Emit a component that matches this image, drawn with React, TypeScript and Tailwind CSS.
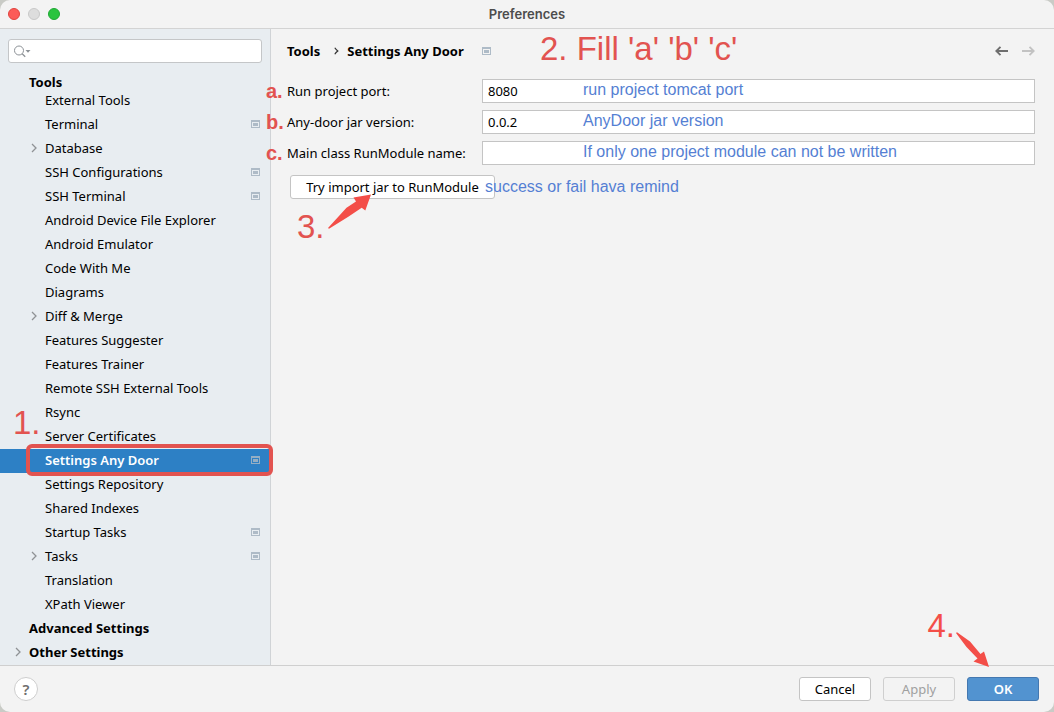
import React from "react";

type Item = {
  name: string;
  level?: 0 | 1;
  chevron?: boolean;
  project?: boolean;
  selected?: boolean;
};

const items: Item[] = [
  { name: "External Tools" },
  { name: "Terminal", project: true },
  { name: "Database", chevron: true },
  { name: "SSH Configurations", project: true },
  { name: "SSH Terminal", project: true },
  { name: "Android Device File Explorer" },
  { name: "Android Emulator" },
  { name: "Code With Me" },
  { name: "Diagrams" },
  { name: "Diff & Merge", chevron: true },
  { name: "Features Suggester" },
  { name: "Features Trainer" },
  { name: "Remote SSH External Tools" },
  { name: "Rsync" },
  { name: "Server Certificates" },
  { name: "Settings Any Door", project: true, selected: true },
  { name: "Settings Repository" },
  { name: "Shared Indexes" },
  { name: "Startup Tasks", project: true },
  { name: "Tasks", chevron: true, project: true },
  { name: "Translation" },
  { name: "XPath Viewer" },
  { name: "Advanced Settings", level: 0 },
  { name: "Other Settings", level: 0, chevron: true },
];

const fields = [
  { id: "port", mark: "a.", label: "Run project port:", value: "8080", note: "run project tomcat port" },
  { id: "version", mark: "b.", label: "Any-door jar version:", value: "0.0.2", note: "AnyDoor jar version" },
  { id: "module", mark: "c.", label: "Main class RunModule name:", value: "", note: "If only one project module can not be written" },
];

function ProjectIcon({ className }: { className: string }) {
  return (
    <svg width="9" height="8" viewBox="0 0 9 8" className={className} fill="currentColor" aria-hidden="true">
      <path fillRule="evenodd" d="M0 0h9v8H0zM1 2v5h7V2z" />
      <rect x="2" y="3" width="5" height="3" />
    </svg>
  );
}

function Chevron() {
  return (
    <svg width="6" height="10" viewBox="0 0 6 10" fill="none" stroke="#8f9295" strokeWidth="1.3" aria-hidden="true">
      <path d="M1 1l4 4-4 4" />
    </svg>
  );
}

function TreeRow({ item }: { item: Item }) {
  const top = item.level === 0;
  return (
    <li className="relative">
      <button
        type="button"
        aria-current={item.selected ? "page" : undefined}
        className={
          "flex h-6 w-full items-center pr-[10px] pb-[2px] text-left " +
          (item.selected ? "bg-[#2d80c5] font-semibold text-white " : "") +
          (top ? "pl-[15px] font-bold" : "pl-[31px]")
        }
      >
        <span className="flex w-[14px] shrink-0">{item.chevron && <Chevron />}</span>
        <span className="flex-1 whitespace-nowrap">{item.name}</span>
        {item.project && <ProjectIcon className={item.selected ? "text-[#94aec4]" : "text-[#aebbc7]"} />}
      </button>
      {item.selected && (
        <>
          <span className="pointer-events-none absolute -top-[5px] -right-[3px] -bottom-[3px] left-[26px] z-10 rounded-md border-4 border-[#e25350]" />
          <span className="pointer-events-none absolute -top-[42px] left-[13px] font-['Liberation_Sans',sans-serif] text-[33px] leading-8 text-[#e25350]">
            1.
          </span>
        </>
      )}
    </li>
  );
}

export default function App() {
  return (
    <div className="min-h-screen bg-[#c9cbc6]">
      <div className="flex min-h-screen flex-col overflow-hidden rounded-[10px] bg-[#f3f3f3] font-['Noto_Sans',sans-serif] text-[13px] leading-4 text-black">
        <header className="relative flex h-[29px] items-center justify-center border-b border-[#d3d3d3]">
          <div className="absolute left-2 flex gap-2">
            <button type="button" aria-label="Close" className="size-3 rounded-full border border-[#e0443e] bg-[#fc5b57]" />
            <button type="button" aria-label="Minimize" className="size-3 rounded-full border border-[#c8c8c8] bg-[#dddddd]" />
            <button type="button" aria-label="Zoom" className="size-3 rounded-full border border-[#1fa834] bg-[#29c43f]" />
          </div>
          <h1 className="pb-px font-['Inter',sans-serif] text-[13px] font-semibold text-[#4c4c4c]">Preferences</h1>
        </header>

        <div className="flex flex-1">
          <nav className="w-[271px] shrink-0 border-r border-[#d0d3d6] bg-[#e8edf1]">
            <div className="mx-2 mt-[10px] flex h-6 items-center rounded-[3px] border border-[#c4c6c8] bg-white pl-[5px]">
              <svg width="17" height="13" viewBox="0 0 17 13" fill="none" stroke="#8c9196" aria-hidden="true">
                <circle cx="5" cy="5.5" r="4.5" />
                <path d="M8.2 8.8l3 3" strokeWidth="1.3" />
                <path d="M11.5 5h5l-2.500 2.800z" fill="#8c9196" stroke="none" />
              </svg>
              <input type="search" aria-label="Search settings" className="h-full min-w-0 flex-1 bg-transparent px-1 outline-none" />
            </div>
            <h2 className="mt-[11px] h-[15px] pl-[29px] font-bold">Tools</h2>
            <ul>
              {items.map((item) => (
                <TreeRow key={item.name} item={item} />
              ))}
            </ul>
          </nav>

          <main className="min-w-0 flex-1 pr-[19px] pl-4">
            <div className="relative flex h-[50px] items-center pb-[6px]">
              <h2 className="flex items-center font-bold">
                Tools
                <svg width="5" height="8" viewBox="0 0 5 8" fill="none" stroke="#333" strokeWidth="1.2" className="mr-2 ml-[14px]" aria-hidden="true">
                  <path d="M0.800 0.800C1.800 2.500 2.700 3.200 3.800 4C2.700 4.800 1.800 5.500 0.800 7.200" />
                </svg>
                Settings Any Door
              </h2>
              <ProjectIcon className="ml-[18px] text-[#aebbc7]" />
              <span className="absolute top-1 left-[253px] font-['Liberation_Sans',sans-serif] text-[33px] leading-8 whitespace-nowrap text-[#e25350]">
                2. Fill 'a' 'b' 'c'
              </span>
              <div className="ml-auto flex gap-[14px]">
                <button type="button" aria-label="Back" className="text-[#6e6e6e]">
                  <svg width="13" height="10" viewBox="0 0 13 10" fill="none" stroke="currentColor" strokeWidth="1.900" aria-hidden="true">
                    <path d="M13 5H1.500M5.500 0.800L1.300 5l4.200 4.200" />
                  </svg>
                </button>
                <button type="button" aria-label="Forward" className="text-[#c2c2c2]">
                  <svg width="13" height="10" viewBox="0 0 13 10" fill="none" stroke="currentColor" strokeWidth="1.900" aria-hidden="true">
                    <path d="M0 5h11.500M7.500 0.800L11.700 5L7.500 9.200" />
                  </svg>
                </button>
              </div>
            </div>

            <form className="flex flex-col gap-[7px]" onSubmit={(e) => e.preventDefault()}>
              {fields.map((f) => (
                <div key={f.id} className="relative grid grid-cols-[195px_1fr] items-center">
                  <span className="absolute -left-[21px] font-['Liberation_Sans',sans-serif] text-xl leading-6 font-bold text-[#e25350]">{f.mark}</span>
                  <label htmlFor={f.id} className="whitespace-nowrap">{f.label}</label>
                  <div className="relative">
                    <input
                      id={f.id}
                      type="text"
                      defaultValue={f.value}
                      className="block h-6 w-full border border-[#c4c4c4] bg-white px-[5px] outline-none"
                    />
                    <span className="pointer-events-none absolute top-[2px] left-[101px] font-['Liberation_Sans',sans-serif] text-base leading-[18px] whitespace-nowrap text-[#557fd3]">
                      {f.note}
                    </span>
                  </div>
                </div>
              ))}
              <div className="relative mt-[3px] ml-[3px] flex">
                <button type="button" className="h-6 w-[205px] rounded-[3px] border border-[#c4c4c4] bg-white whitespace-nowrap">
                  Try import jar to RunModule
                </button>
                <span className="absolute top-[3px] left-[195px] font-['Liberation_Sans',sans-serif] text-base leading-[18px] whitespace-nowrap text-[#557fd3]">
                  success or fail hava remind
                </span>
                <span className="absolute top-9 left-[7px] font-['Liberation_Sans',sans-serif] text-[33px] leading-8 text-[#e25350]">3.</span>
                <svg width="44" height="35" viewBox="0 0 44 35" className="pointer-events-none absolute top-[19px] left-[38px]" fill="#f34e48" aria-hidden="true">
                  <path d="M43 0.500L37.300 16.500L33.700 13.700L20.300 22.700L1 34.800L0 34L18.500 13.800L28 7.500L25.500 3.500z" />
                </svg>
              </div>
            </form>
          </main>
        </div>

        <footer className="relative flex h-[47px] items-center justify-between border-t border-[#cfcfcf] pr-[15px] pl-[14px]">
          <button type="button" aria-label="Help" className="flex size-6 items-center justify-center rounded-full border border-[#cdcdcd] bg-white text-[15px] font-semibold text-[#6e6e6e]">
            ?
          </button>
          <div className="flex gap-3">
            <button type="button" className="h-6 w-[72px] rounded-[3px] border border-[#c4c4c4] bg-white">Cancel</button>
            <button type="button" disabled className="h-6 w-[72px] rounded-[3px] border border-[#cfcfcf] text-[#a0a0a0]">Apply</button>
            <button type="submit" className="h-6 w-[72px] rounded-[3px] border border-[#4478b0] bg-[#5293d0] font-semibold text-white">OK</button>
          </div>
          <span className="absolute -top-14 right-[99px] font-['Liberation_Sans',sans-serif] text-[33px] leading-8 text-[#f34e48]">4.</span>
          <svg width="34" height="36" viewBox="0 0 34 36" className="pointer-events-none absolute -top-[34px] right-[64px]" fill="#f34e48" aria-hidden="true">
            <path d="M1 0.300L14 9.500L24.500 22L28 19.500L33 35L17.500 29.500L21.500 26.500L10.500 15L0 1z" />
          </svg>
        </footer>
      </div>
    </div>
  );
}
